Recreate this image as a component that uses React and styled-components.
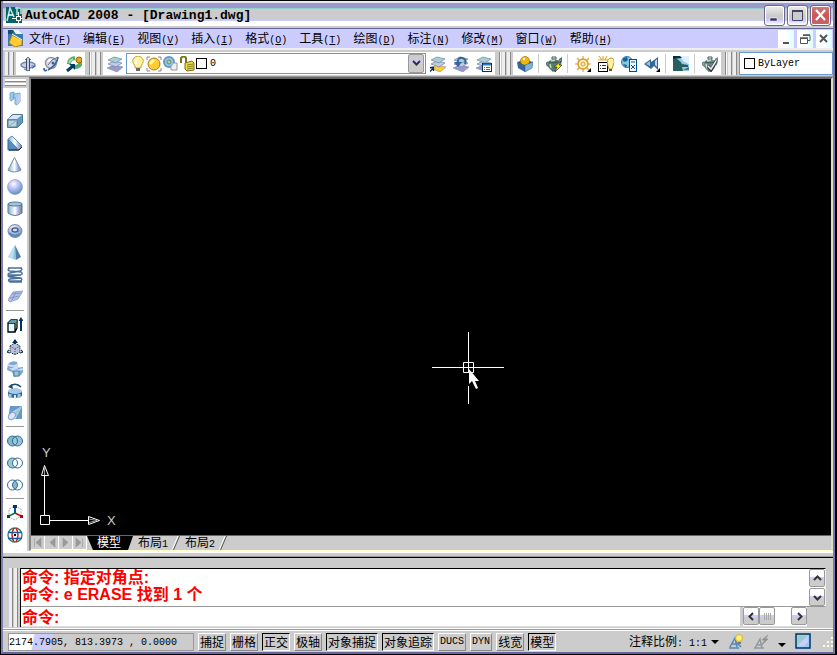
import React from "react";
import styled, { createGlobalStyle, css } from "styled-components";

const GlobalStyle = createGlobalStyle`
  * {
    box-sizing: border-box;
  }
  body {
    margin: 0;
    background: #000;
    font-family: "Liberation Mono", "Noto Sans CJK SC", monospace;
    font-size: 10px;
    color: #000;
  }
  button, input, select {
    font: inherit;
    color: inherit;
    margin: 0;
    padding: 0;
    border: 0;
    border-radius: 0;
    background: none;
    outline: none;
  }
  svg {
    display: block;
    flex: none;
  }
`;

const Frame = styled.div`
  display: flex;
  flex-direction: column;
  height: 100vh;
  min-height: 480px;
  overflow: hidden;
  background: #ccc;
  border: 1px solid #000;
  border-right-width: 2px;
`;

const Inner = styled.div`
  flex: 1;
  min-height: 0;
  display: flex;
  flex-direction: column;
  border: 2px solid #9999cc;
  border-top: 0;
  border-left-color: #8080b0;
  border-right-color: #7777aa;
  border-bottom-color: #666699;
`;

const Han = styled.span`
  font-family: "Noto Sans CJK SC", sans-serif;
  font-size: ${p => (p.$big ? "16px" : "12px")};
`;

const TitleBar = styled.header`
  flex: none;
  height: 28px;
  display: flex;
  align-items: center;
  gap: 3px;
  padding: 0 2px 0 3px;
  border-bottom: 1px solid #666699;
  background: linear-gradient(
    #e8e8f4 0 2px,
    #9999cc 2px 7px,
    #99cccc 7px 8px,
    #ccc 8px 19px,
    #ccccff 19px 20px,
    #fff 20px 25px,
    #ccc 25px 27px
  );
`;

const Title = styled.h1`
  flex: 1;
  margin: 0;
  padding-top: 2px;
  font-size: 13px;
  line-height: 18px;
  font-weight: bold;
  white-space: pre;
`;

const WindowButtons = styled.div`
  display: flex;
  gap: 2px;
  padding-top: 2px;
`;

const WindowButton = styled.button`
  width: 21px;
  height: 21px;
  display: grid;
  place-items: center;
  border: 1px solid #666699;
  border-radius: 3px;
  box-shadow: inset 0 0 0 1px #fff;
  background: ${p =>
    p.$close
      ? "linear-gradient(#cc8080, #cc5555 50%, #cc6666)"
      : "linear-gradient(#eee, #ccc 50%, #ccc 65%, #ccccff 75%, #fff)"};
`;

const MenuBar = styled.nav`
  flex: none;
  height: 21px;
  display: flex;
  align-items: center;
  padding: 0 1px 0 5px;
  background: #ccccff;
  border-bottom: 2px solid #eee;
`;

const MenuItem = styled.button`
  height: 18px;
  padding: 0 6px;
  line-height: 16px;
  white-space: nowrap;
`;

const DocumentButtons = styled.div`
  display: flex;
  gap: 3px;
  margin-left: auto;
  height: 18px;
`;

const DocumentButton = styled.button`
  width: 16px;
  display: grid;
  place-items: center;
  background: linear-gradient(90deg, #fff 50%, #ddffff);
`;

const ToolRow = styled.div`
  flex: none;
  height: 27px;
  display: flex;
  overflow: hidden;
  padding: 2px 0 1px;
  border-bottom: 1px solid #999;
`;

const ToolBar = styled.div`
  flex: ${p => (p.$grow ? "1" : "none")};
  display: flex;
  align-items: stretch;
  padding-right: ${p => (p.$grow ? "0" : "4px")};
  border-right: ${p => (p.$grow ? "0" : "1px solid #888")};
  box-shadow: ${p => (p.$grow ? "none" : "1px 0 #fff")};
`;

const Grip = styled.span`
  flex: none;
  ${p =>
    p.$wide
      ? css`
          height: 11px;
          border-bottom: 1px solid #ccc;
          border-left: 2px solid #ccc;
          border-right: 1px solid #ccc;
          background: linear-gradient(#ccc 0 2px, #fff 2px 4px, #888 4px 5px, #ccc 5px 6px, #fff 6px 8px, #888 8px 9px, #ccc 9px);
        `
      : css`
          width: 9px;
          margin: ${p.$tall ? "0" : "0 2px"};
          background: linear-gradient(90deg, #eee 0 3px, #888 3px 4px, #ccc 4px 5px, #eee 5px 8px, #888 8px);
        `}
`;

const Tools = styled.div`
  display: flex;
  align-items: center;
  background: #fff;
`;

const ToolButton = styled.button`
  width: 23px;
  height: 22px;
  display: grid;
  place-items: center;
`;

const Divider = styled.span`
  flex: none;
  ${p =>
    p.$wide
      ? css`
          height: 6px;
          margin: 0 3px;
          background: linear-gradient(transparent 2px, #999 2px 3px, transparent 3px);
        `
      : css`
          width: 6px;
          height: 19px;
          background: linear-gradient(90deg, transparent 2px, #ccc 2px 3px, transparent 3px);
        `}
`;

const Combo = styled.label`
  width: ${p => (p.$grow ? "auto" : "300px")};
  flex: ${p => (p.$grow ? "1" : "none")};
  display: flex;
  align-items: center;
  gap: 1px;
  padding-left: 4px;
  background: #fff;
  border: 1px solid #6699cc;

  select {
    flex: 1;
    min-width: 0;
    height: 18px;
    padding-left: 2px;
    appearance: none;
  }
`;

const Swatch = styled.span`
  width: 11px;
  height: 11px;
  border: 1px solid #000;
  background: #fff;
`;

const DropArrow = styled.span`
  width: 16px;
  height: 19px;
  margin-right: 1px;
  display: grid;
  place-items: center;
  border: 1px solid #999;
  border-radius: 2px;
  background: linear-gradient(#ccc 30%, #ccccff 35% 50%, #ccc 55%);
`;

const Work = styled.div`
  flex: 1;
  min-height: 0;
  display: flex;
  border-bottom: 2px solid #fff;
`;

const SideBar = styled.aside`
  width: 26px;
  flex: none;
  display: flex;
  flex-direction: column;
  overflow: hidden;
  background: #fff;
  border-right: 2px solid #ccc;

  ${ToolButton} {
    flex: none;
  }
`;

const Mdi = styled.section`
  flex: 1;
  min-width: 0;
  display: flex;
  flex-direction: column;
  border: 2px solid #666;
  border-left-color: #888;
  border-right: 2px solid #ddddcc;
  border-bottom: 1px solid #ffffcc;
`;

const Canvas = styled.main`
  position: relative;
  flex: 1;
  min-height: 0;
  overflow: hidden;
  background: #000;
`;

const Ucs = styled.svg`
  position: absolute;
  left: 8px;
  bottom: 5px;
  font-family: "Liberation Sans", sans-serif;
`;

const Crosshair = styled.svg`
  position: absolute;
  left: 401px;
  top: 253px;
`;

const Tabs = styled.div`
  flex: none;
  height: 15px;
  display: flex;
  border-top: 1px solid #666;
  background: #ccc;
`;

const TabArrow = styled.button`
  width: 14px;
  display: grid;
  place-items: center;
  border-right: 1px solid #fff;
  border-bottom: 1px solid #fff;
`;

const Tab = styled.button`
  display: flex;
  align-items: center;
  height: 14px;
  line-height: 14px;
  white-space: nowrap;
  ${p =>
    p.$active
      ? css`
          padding: 0 12px 0 10px;
          color: #fff;
          background: #000;
          clip-path: polygon(0 0, 100% 0, calc(100% - 5px) 100%, 6px 100%);
        `
      : css`
          gap: 4px;
          padding-left: 5px;
        `}
`;

const Command = styled.section`
  flex: none;
  display: flex;
  margin-top: 4px;
  padding: 10px 7px 1px 6px;
  border-top: 1px solid #000;
  box-shadow: 0 -1px #999;
  gap: 2px;
`;

const CommandBox = styled.div`
  flex: 1;
  min-width: 0;
  color: #f00;
  font-family: "Liberation Sans", "Noto Sans CJK SC", sans-serif;
  font-size: 16px;
  font-weight: bold;
  border-left: 1px solid #000;
`;

const History = styled.div`
  display: flex;
  height: 39px;
  border-top: 1px solid #000;
  border-bottom: 1px solid #999;
  border-right: 1px solid #eee;
  background: #fff;
`;

const Log = styled.div`
  flex: 1;
  padding-left: 1px;
`;

const Line = styled.p`
  margin: 0;
  height: 17px;
  line-height: 15px;
  white-space: pre;
`;

const Scroll = styled.div`
  display: flex;
  flex-direction: ${p => (p.$side ? "row" : "column")};
  justify-content: ${p => (p.$side ? "flex-start" : "space-between")};
  width: ${p => (p.$side ? "67px" : "16px")};
  border-left: ${p => (p.$side ? "3px solid #ccc" : "0")};
`;

const ScrollButton = styled.button`
  width: 16px;
  height: 18px;
  display: grid;
  place-items: center;
  margin-right: ${p => (p.$gap ? "16px" : "0")};
  border: 1px solid #999;
  border-radius: 2px;
  background: linear-gradient(#fff 40%, #ccccff 45% 55%, #ccc 60%);
`;

const Prompt = styled.label`
  display: flex;
  height: 20px;
  line-height: 18px;
  margin-right: 19px;
  padding-left: 1px;
  background: #fff;
  border-bottom: 1px solid #ddd;

  input {
    flex: 1;
    min-width: 0;
    padding-left: 4px;
  }
`;

const StatusBar = styled.footer`
  flex: none;
  display: flex;
  align-items: center;
  height: 24px;
  padding: 2px 0 0 5px;
  gap: 4px;
  border-top: 1px solid #fff;
  box-shadow: inset 0 1px #999, inset 0 2px #fff;
`;

const Coordinates = styled.output`
  width: 186px;
  height: 18px;
  line-height: 17px;
  white-space: pre;
  border: 1px solid #999;
  background: linear-gradient(100deg, #fff 0 24px, #ccccff 26px 42px, #ccc 44px);
`;

const Toggle = styled.button`
  flex: none;
  height: 18px;
  padding: 0 1px;
  line-height: 16px;
  white-space: nowrap;
  border: 1px solid;
  border-color: ${p => (p["aria-pressed"] ? "#000 #fff #fff #000" : "#fff #888 #888 #fff")};
`;

const Tray = styled.div`
  display: flex;
  align-items: center;
  gap: 9px;
  margin-left: auto;
`;

const ScaleButton = styled.button`
  display: flex;
  align-items: center;
  gap: 4px;
  padding-top: 1px;
  line-height: 16px;
  white-space: pre;
`;

const TrayButton = styled.button`
  display: grid;
  place-items: center;
  height: 18px;
`;

// Chinese runs are set larger than the half-width latin around them
const Mixed = ({ text, big }) =>
  text.split(/([\u4e00-\u9fff]+)/).map((part, i) =>
    i % 2 ? (
      <Han key={i} $big={big}>
        {part}
      </Han>
    ) : (
      part
    )
  );

const Icon = ({ children, w = 16, h = 16 }) => (
  <svg width={w} height={h} viewBox={`0 0 ${w} ${h}`} fill="none" aria-hidden="true">
    {children}
  </svg>
);

const Sheets = ({ base = "#9999cc" }) => (
  <>
    <path d="M0 12l7-3 9 2-6 5z" fill={base} stroke="#8089ad" strokeWidth=".6" />
    <path d="M1 8l6-3 8 2-6 4z" fill="#c3cbe8" stroke="#6f7f9f" strokeWidth=".7" />
    <path d="M1 4l6-3 8 2-6 4z" fill="#a9cfd4" stroke="#7083a5" strokeWidth=".7" />
  </>
);

const Teapot = ({ color }) => (
  <>
    <path d="M3 7Q0 5 1 9l3 2M12 7l2-4 2-1-2 7" stroke={color} strokeWidth="1.600" />
    <path d="M2 6q6-6 12 0 0 6-4 9H6Q1 12 2 6z" fill={color} />
    <path d="M3 6q5 2 10 0M6 15h4M6 1h4v2H6z" stroke="#3d5751" />
    <path d="M5 5l4-1M4 8l1 4" stroke="#c5ddd2" strokeWidth="1.400" />
  </>
);

const Lens = ({ left, mid, right }) => (
  <Icon>
    <circle cx="5.5" cy="8" r="5" fill={left} />
    <circle cx="10.5" cy="8" r="5" fill={right} />
    <path d="M8 3.7a5 5 0 010 8.6a5 5 0 010-8.6" fill={mid} />
    <circle cx="5.5" cy="8" r="5" stroke="#336699" />
    <circle cx="10.5" cy="8" r="5" stroke="#336699" />
  </Icon>
);

const Shades = () => (
  <defs>
    <linearGradient id="metal">
      <stop stopColor="#7fa8c8" />
      <stop offset=".25" stopColor="#bcd8e6" />
      <stop offset=".5" stopColor="#fff" />
      <stop offset=".65" stopColor="#ccccf4" />
      <stop offset="1" stopColor="#5f7d94" />
    </linearGradient>
    <radialGradient id="ball" cx=".4" cy=".3" r=".7">
      <stop stopColor="#fff" />
      <stop offset=".35" stopColor="#ccccff" />
      <stop offset="1" stopColor="#5c91bd" />
    </radialGradient>
    <linearGradient id="glass" x2="1" y2="1">
      <stop stopColor="#99cccc" />
      <stop offset=".45" stopColor="#99cccc" />
      <stop offset=".5" stopColor="#ccccff" />
      <stop offset=".7" stopColor="#ccccff" />
      <stop offset=".75" stopColor="#99cccc" />
    </linearGradient>
  </defs>
);

const orbitIcons = [
  ["Constrained orbit", <Icon><ellipse cx="8" cy="9" rx="7" ry="3" fill="#ccccee" stroke="#6688b3" strokeWidth="1.500" /><path d="M6.500 2v13M9.500 2v13" stroke="#444d5c" /><path d="M8 2v13" stroke="#ccd" strokeWidth="2" /><path d="M5 4l3-3 3 3M4 13l4 2 2-2" stroke="#537baa" /><path d="M10 9l3 1-1 3 4-3" fill="#456b99" /></Icon>],
  ["Free orbit", <Icon><circle cx="8" cy="7" r="5.500" fill="#d9ddf5" stroke="#999" strokeWidth="1.500" /><path d="M5 6q1-3 4-2" stroke="#fff" strokeWidth="2" /><path d="M4 14Q1 16 1 12M15 1q-1 8-10 13" stroke="#336699" strokeWidth="1.800" /><path d="M15 1Q8 3 5 9" stroke="#668" /><circle cx="10" cy="7" r="1.500" fill="#336699" /></Icon>],
  ["Continuous orbit", <Icon><path d="M3 8q0-5 6-6M9 11q5 0 6-5" stroke="#55aa66" strokeWidth="4" /><path d="M3 7q1-3 4-4" stroke="#a7ddb8" strokeWidth="2" /><circle cx="13" cy="4" r="3" fill="#e6a817" stroke="#996600" /><path d="M1 15l6-5" stroke="#003f5f" strokeWidth="3" /><path d="M3 8h6v6z" fill="#003f5f" /></Icon>],
];

const layerIcons = [
  ["Make current", <Icon><Sheets base="#ffcc33" /><path d="M0 15.500l3-3M0 11.500h3.500v3.500" stroke="#003366" strokeWidth="1.300" /></Icon>],
  ["Layer previous", <Icon><Sheets /><path d="M5 8Q4 1 9 2t3 6" stroke="#336699" strokeWidth="2" /><path d="M1 6h8l-4 5z" fill="#336699" /></Icon>],
  ["Layer states", <Icon><Sheets /><rect x="6.500" y="7.500" width="9" height="8" fill="#fff" stroke="#003366" /><path d="M7 8.500h8" stroke="#3377bb" strokeWidth="2" /><path d="M8 11.500h1m1 0h4M8 13.500h1m1 0h4" stroke="#3377bb" /></Icon>],
];

const renderIcons = [
  ["Materials", <Icon><path d="M0 6l8-2 8 2-8 4z" fill="#174e79" /><circle cx="8" cy="5" r="4.500" fill="#f5b700" stroke="#9c7100" strokeWidth=".7" /><circle cx="7" cy="3" r="1.200" fill="#fff" /><path d="M0 6l8 3v7l-7-4z" fill="#336699" /><path d="M8 9l8-3-1 6-7 4z" fill="#7db4d7" stroke="#336699" strokeWidth=".6" /></Icon>],
  null,
  ["Render", <Icon><Teapot color="#557a70" /><path d="M15 5l-7 6h3l-2 5 7-7h-3z" fill="#ffed00" stroke="#333" strokeWidth=".7" /></Icon>],
  null,
  ["Point light", <Icon><path d="M8 0v16M0 8h16M2 2l12 12M14 2L2 14" stroke="#e0a040" strokeWidth="1.200" /><circle cx="8" cy="8" r="5" fill="#fff2c5" stroke="#dd9922" strokeWidth="1.500" /><circle cx="8" cy="8" r="2" stroke="#cc9933" /><path d="M16 12v4h-4z" fill="#000" /></Icon>],
  ["Light list", <Icon><path d="M1 0l3 4M5 0v4M9 0L7 4M0 4h10" stroke="#e2aa39" strokeWidth="1.200" /><rect x=".5" y="6.500" width="9" height="9" fill="#fff" stroke="#000" /><path d="M2 9.500h1m1 0h4M2 12.500h1m1 0h4" stroke="#234" /><path d="M10 10q-2-8 3-8t2 8l-1 3h-3z" fill="#fff3a1" stroke="#bd9d33" /><path d="M11 14h3" stroke="#555" strokeWidth="2" /></Icon>],
  ["Geographic location", <Icon><circle cx="6" cy="6" r="5.500" fill="#85c7db" stroke="#3376b0" /><path d="M2 2l4-1 1 3-3 2-2-1M2 8l4 1-1 3" fill="#16639e" /><rect x="8.500" y="3.500" width="7" height="12" fill="#eef8ff" stroke="#004c8c" /><path d="M10 6h4M10 9l4 4M14 9l-4 4" stroke="#164f99" /></Icon>],
  ["Walk and fly", <Icon><path d="M0 8l7-5v3l3-2 4-3v13l-4-4-3 3z" fill="#336699" /><path d="M2 8l4-3v5z" fill="#99cccc" /><path d="M11 5l2-2v8l-2-2z" fill="#ccccff" /><path d="M16 12v4h-4z" fill="#000" /></Icon>],
  null,
  ["Render environment", <Icon><path d="M0 0h16v15H0z" fill="#97c9df" /><path d="M7 0h9v8q-7-2-9-8z" fill="#e3efff" /><path d="M0 1q7 3 9 7l6 1v2H9l1 4H0z" fill="#275e5f" /><path d="M0 0h7l2 2-9 1z" fill="#003344" /><path d="M10 14h6v-3z" fill="#3377ad" /></Icon>],
  null,
  ["Advanced render", <Icon><Teapot color="#6c8a83" /><path d="M6 10l3 4 5-9" stroke="#334" strokeWidth="3" /><path d="M6 10l3 3 5-8" stroke="#e7eeed" strokeWidth="1.500" /></Icon>],
];

const modelIcons = [
  ["Polysolid", <Icon><path d="M3 2l4-1v7L4 10 3 8z" fill="#99ccee" stroke="#6699cc" strokeWidth=".8" /><path d="M7 3l6-1v9l-3 3-2-1V6L6 7z" fill="#a6ccec" stroke="#6699cc" strokeWidth=".8" /><path d="M10 6l3-3v8l-3 3z" fill="#c5c5f5" /></Icon>],
  ["Box", <Icon><path d="M0.500 6.500l5-5h10v8l-5 5h-10z" fill="#6699bb" stroke="#4b7798" /><path d="M1 7h9v7H1z" fill="#bbd6df" stroke="#557c96" /><path d="M1 6l5-4h9l-5 4z" fill="#dce4ff" /><path d="M1 14l9-7" stroke="#8aabc1" /></Icon>],
  ["Wedge", <Icon><path d="M1 4v11h11z" fill="#538fc0" stroke="#336699" /><path d="M1 4l4-3 10 10-3 4z" fill="url(#metal)" stroke="#668aa4" /><path d="M2 15h10l3-3" stroke="#222" /></Icon>],
  ["Cone", <Icon><path d="M7.500 0.500L1 13q6 4 13 0z" fill="url(#metal)" stroke="#778b9b" /></Icon>],
  ["Sphere", <Icon><circle cx="8" cy="8" r="7.500" fill="url(#ball)" stroke="#8499b7" strokeWidth=".6" /></Icon>],
  ["Cylinder", <Icon><path d="M1 3v9q7 5 14 0V3z" fill="url(#metal)" stroke="#587a91" /><ellipse cx="8" cy="3" rx="7" ry="2" fill="#a3c5db" stroke="#557997" /></Icon>],
  ["Torus", <Icon><ellipse cx="8" cy="8" rx="7" ry="6.500" fill="url(#ball)" stroke="#7f92a2" /><ellipse cx="8" cy="7" rx="3" ry="2" fill="#d9dde8" stroke="#41657f" strokeWidth="1.500" /><path d="M2 10q5 5 11 1" stroke="#528db9" strokeWidth="2" /></Icon>],
  ["Pyramid", <Icon><path d="M8 0L1 12l8 3z" fill="#8ec8dd" /><path d="M8 0l6 12-5 3z" fill="#557fab" /><path d="M8 0L1 12l5 2z" fill="#bfdcf3" /></Icon>],
  ["Helix", <Icon><path d="M15 1H3Q-1 3 3 4l11 1q3 2-1 3H3q-4 1 0 2l11 1q2 2-1 3H2M1 1h12q4 1 0 3L3 6q-4 1 0 3l11-1M14 11L3 12q-3 1 0 3h12" stroke="#4c719b" strokeWidth="1.400" /></Icon>],
  ["Planar surface", <Icon><path d="M1 11l5-8 10-1-5 8-8 3z" fill="#b5bfe8" stroke="#91a5ce" /><path d="M5 5l9-1M3 9l9-2M9 3l-4 8" stroke="#6f90bb" strokeWidth=".8" /></Icon>],
  null,
  ["Extrude", <Icon><path d="M1 6h7v9H1zM1 6l3-3h6v8l-2 4" fill="#dffbff" stroke="#000" strokeWidth="1.300" /><path d="M1 6l3-3h6L8 6z" fill="#5f9aaa" /><path d="M14 14V3" stroke="#003366" strokeWidth="2" /><path d="M11.500 4L14 0l2.500 4z" fill="#003366" /></Icon>],
  ["Press pull", <Icon><path d="M3 7l5-3 5 3v6l-5 3-5-3z" fill="#b9bfdb" stroke="#000" strokeDasharray="1 1" /><path d="M3 7l5 3 5-3M8 10v6" stroke="#456" strokeDasharray="1 1" /><path d="M8 5V1" stroke="#003355" strokeWidth="2" /><path d="M5 4l3-4 3 4z" fill="#003355" /><path d="M2 11l-2 2 3 1M14 11l2 2-3 1" stroke="#17384f" strokeWidth="1.200" /></Icon>],
  ["Sweep", <Icon><path d="M1 3q4-4 9-2l1 4-5 1 2 1 8-1v5l-3 4-6 1-2-5-5-2z" fill="#7ba7d2" /><path d="M1 4q5 2 9 0v3l-5 1 4 2 7-2" stroke="#cbdaf6" strokeWidth="2" /><rect x="7" y="10" width="5" height="5" fill="#99cccc" stroke="#517caf" /></Icon>],
  ["Revolve", <Icon><path d="M1 8q7 4 14 0v5q-7 4-14 0z" fill="#336699" /><ellipse cx="8" cy="8" rx="7" ry="3" fill="#a9c9e8" /><path d="M3 11v4M12 11v4" stroke="#99cccc" strokeWidth="3" /><path d="M8 12v4" stroke="#dbe9f9" strokeWidth="2" /><path d="M14 4Q9-1 3 3" stroke="#174c67" strokeWidth="1.500" /><path d="M1 4l4-3 1 5z" fill="#174c67" /></Icon>],
  ["Loft", <Icon><path d="M3 1h12v13H1z" fill="#6699cc" /><path d="M15 1L9 13q-3 4-8 1 0-5 4-7z" fill="#c6dbe9" /><path d="M15 1L6 8l3 4z" fill="#99cccc" /><ellipse cx="5" cy="11" rx="3" ry="4" fill="#dee2fc" stroke="#85a8c9" transform="rotate(45 5 11)" /></Icon>],
  null,
  ["Union", <Lens left="#80bdc8" mid="#99cccc" right="#99c5d9" />],
  ["Subtract", <Lens left="#99cccc" mid="#f8ffff" right="#fff" />],
  ["Intersect", <Lens left="#fff" mid="#80bdc8" right="#fff" />],
  null,
  ["3D move", <Icon><path d="M8 1l6 3v7l-6 4-6-3V4z" stroke="#aaa" strokeDasharray="2 1" /><path d="M8 8V2" stroke="#0055aa" strokeWidth="2" /><path d="M8 8l-6 3" stroke="#008033" strokeWidth="1.500" /><path d="M8 8l6 3" stroke="#bb1111" strokeWidth="1.500" /><path d="M6 0h4v3H6z" fill="#003377" /><path d="M0 10h3v3H0z" fill="#005020" /><path d="M13 10h3v3h-3z" fill="#b00" /></Icon>],
  ["3D rotate", <Icon><circle cx="8" cy="8" r="7" stroke="#338066" strokeWidth="1.400" /><path d="M7 1q-4 7 0 14M9 1q4 7 0 14" stroke="#d01717" strokeWidth="1.500" /><path d="M1 5.500h14M1 11.500h14" stroke="#145daa" strokeWidth="1.400" /><path d="M7 7h2v2H7z" fill="#000" /></Icon>],
  ["3D align", <Icon><path d="M4 5l6-3v4l3 8H7z" fill="#ccc" stroke="#888" /></Icon>],
];

const menus = [
  ["文件", "F"],
  ["编辑", "E"],
  ["视图", "V"],
  ["插入", "I"],
  ["格式", "O"],
  ["工具", "T"],
  ["绘图", "D"],
  ["标注", "N"],
  ["修改", "M"],
  ["窗口", "W"],
  ["帮助", "H"],
];

const toggles = [
  ["捕捉", false],
  ["栅格", false],
  ["正交", true],
  ["极轴", false],
  ["对象捕捉", true],
  ["对象追踪", true],
  ["DUCS", false],
  ["DYN", false],
  ["线宽", false],
  ["模型", true],
];

const ToolSet = ({ items, wide }) =>
  items.map((item, i) =>
    item ? (
      <ToolButton key={i} type="button" aria-label={item[0]}>
        {item[1]}
      </ToolButton>
    ) : (
      <Divider key={i} $wide={wide} />
    )
  );

const Chevron = ({ d }) => (
  <Icon w={9} h={9}>
    <path d={d} stroke="#333" strokeWidth="2" />
  </Icon>
);

const Slash = () => (
  <Icon w={8} h={14}>
    <path d="M7.500 0L1.500 14" stroke="#555" />
    <path d="M6 0L0 14" stroke="#fff" />
  </Icon>
);

const TitleRow = () => (
  <TitleBar>
    <Icon>
      <rect width="16" height="16" fill="#006666" />
      <path d="M1 14L4 1l4 9M9 1h6v6M11 0v8" stroke="#b9e9df" strokeWidth="1.500" />
      <path d="M2 8h5" stroke="#fff" strokeWidth="1.500" />
      <path d="M12.500 5v11M6 11.500h10" stroke="#fff" />
      <rect x="10.500" y="9.500" width="4" height="4" fill="#006666" stroke="#fff" />
    </Icon>
    <Title>AutoCAD 2008 - [Drawing1.dwg]</Title>
    <WindowButtons>
      <WindowButton type="button" aria-label="Minimize">
        <Icon w={15} h={15}><path d="M3 10h7v3H3z" fill="#333366" stroke="#fff" strokeWidth=".5" /></Icon>
      </WindowButton>
      <WindowButton type="button" aria-label="Maximize">
        <Icon w={15} h={15}><path d="M2.500 3.500h10v9h-10z" fill="#ccc" stroke="#444466" /><path d="M2 3h11" stroke="#444466" strokeWidth="2" /></Icon>
      </WindowButton>
      <WindowButton type="button" aria-label="Close" $close>
        <Icon w={15} h={15}><path d="M3 2l9 10M12 2L3 12" stroke="#fff" strokeWidth="2.200" /></Icon>
      </WindowButton>
    </WindowButtons>
  </TitleBar>
);

const Menu = () => (
  <MenuBar>
    <Icon w={15} h={17}>
      <path d="M0 0h11l4 4v12H0z" fill="#347aae" />
      <path d="M0 0h7l-3 4H0z" fill="#174f68" />
      <path d="M5 0h6l4 4H8z" fill="#e7f2ff" />
      <path d="M1 13l3-8 10 5v5l-7 2z" fill="#ffcc33" stroke="#ad821b" />
      <path d="M4 4l10 6" stroke="#fff" />
    </Icon>
    {menus.map(([name, key]) => (
      <MenuItem key={key} type="button">
        <Han>{name}</Han>(<u>{key}</u>)
      </MenuItem>
    ))}
    <DocumentButtons>
      <DocumentButton type="button" aria-label="Minimize drawing">
        <Icon w={12} h={12}><path d="M3 10h6" stroke="#555" strokeWidth="2" /></Icon>
      </DocumentButton>
      <DocumentButton type="button" aria-label="Restore drawing">
        <Icon w={12} h={12}><path d="M4 2.500h7v5H9M1.500 5.500h7v5h-7z" stroke="#555" /><path d="M4 2h7M1 5h8" stroke="#555" strokeWidth="1.500" /></Icon>
      </DocumentButton>
      <DocumentButton type="button" aria-label="Close drawing">
        <Icon w={12} h={12}><path d="M2 2l7 7M9 2L2 9" stroke="#555" strokeWidth="2" /></Icon>
      </DocumentButton>
    </DocumentButtons>
  </MenuBar>
);

const TopTools = () => (
  <ToolRow>
    <ToolBar>
      <Grip />
      <Tools>
        <ToolSet items={orbitIcons} />
      </Tools>
    </ToolBar>
    <ToolBar>
      <Grip />
      <Tools>
        <ToolButton type="button" aria-label="Layer manager">
          <Icon><Sheets /></Icon>
        </ToolButton>
        <Combo>
          <Icon w={14}>
            <path d="M4 10Q0 5 3 2q4-4 8 0 3 3-1 8v2H4z" fill="#fff5a0" stroke="#c3a337" />
            <path d="M5 12h4v3H5z" fill="#667" />
            <path d="M5 4v4" stroke="#fff" strokeWidth="2" />
          </Icon>
          <Icon>
            <path d="M1 1h3M12 1h3v3M1 12v3h3M15 12v3h-3M1 4V1" stroke="#888" />
            <circle cx="8" cy="8" r="6" fill="#ffcc33" stroke="#b37b22" />
            <path d="M4 8l4-4" stroke="#ffff99" strokeWidth="3" />
          </Icon>
          <Icon>
            <circle cx="6" cy="6" r="5" fill="#99cccc" stroke="#6699cc" strokeWidth="2" />
            <circle cx="6" cy="6" r="2" stroke="#5485ba" fill="#cccc66" />
            <path d="M11 7h3v7H8v-3" stroke="#999" fill="#eee" />
          </Icon>
          <Icon w={15}>
            <path d="M1 7V2q3-3 5 0v6" stroke="#7b7418" strokeWidth="2" />
            <path d="M5 7l7-2 2 2v7l-7 1-2-2z" fill="#f1dc32" stroke="#776d1a" />
            <path d="M7 9l6-1M7 11l6-1M7 13l6-1" stroke="#8a8024" />
          </Icon>
          <Swatch />
          <select aria-label="Layer" defaultValue="0">
            <option>0</option>
          </select>
          <DropArrow>
            <Chevron d="M1 2l3.500 3.500L8 2" />
          </DropArrow>
        </Combo>
        <ToolSet items={layerIcons} />
      </Tools>
    </ToolBar>
    <ToolBar>
      <Grip />
      <Tools>
        <ToolSet items={renderIcons} />
      </Tools>
    </ToolBar>
    <ToolBar $grow>
      <Grip />
      <Combo $grow>
        <Swatch />
        <select aria-label="Color" defaultValue="ByLayer">
          <option>ByLayer</option>
        </select>
      </Combo>
    </ToolBar>
  </ToolRow>
);

const Drawing = () => (
  <Canvas>
    <Ucs width="84" height="86" viewBox="0 0 84 86" fill="none" stroke="#fff" aria-label="UCS">
      <path d="M1.500 71.500h9v9h-9zM5.500 71V32M11 76.500h38M2.500 31.500l3-10 4 10zM49.500 72.500v8l11-4z" />
      <path d="M5.500 23v8M50 75l8 1.500-8 2" stroke="#999" />
      <text x="3" y="13" fontSize="13" fill="#ccc" stroke="none">Y</text>
      <text x="68" y="81" fontSize="13" fill="#ccc" stroke="none">X</text>
    </Ucs>
    <Crosshair width="73" height="73" viewBox="0 0 73 73" fill="none" stroke="#fff" aria-hidden="true">
      <path d="M36.500 0v41M36.500 54v18M0 35.500h72M31.500 30.500h10v10h-10z" />
      <path d="M37 37v15l3-3 4 8 2-1-3-7h4z" fill="#fff" stroke="none" />
    </Crosshair>
  </Canvas>
);

const LayoutTabs = () => (
  <Tabs>
    {[
      ["First", "M3.500 2v9M10 2v9L5 6.500z"],
      ["Previous", "M10 2v9L5 6.500z"],
      ["Next", "M4 2v9l5-4.500z"],
      ["Last", "M9.500 2v9M3 2v9l5-4.500z"],
    ].map(([name, d]) => (
      <TabArrow key={name} type="button" aria-label={name}>
        <Icon w={13} h={13}><path d={d} fill="#999" stroke="#999" strokeWidth=".7" /></Icon>
      </TabArrow>
    ))}
    <Tab type="button" $active><span><Mixed text="模型" /></span></Tab>
    <Tab type="button"><span><Mixed text="布局1" /></span><Slash /></Tab>
    <Tab type="button"><span><Mixed text="布局2" /></span><Slash /></Tab>
  </Tabs>
);

const CommandLine = () => (
  <Command>
    <Grip $tall />
    <CommandBox>
      <History>
        <Log>
          <Line><Mixed big text="命令: 指定对角点:" /></Line>
          <Line><Mixed big text="命令: e ERASE 找到 1 个" /></Line>
        </Log>
        <Scroll>
          <ScrollButton type="button" aria-label="Scroll up"><Chevron d="M1 6l3.500-3.500L8 6" /></ScrollButton>
          <ScrollButton type="button" aria-label="Scroll down"><Chevron d="M1 3l3.500 3.500L8 3" /></ScrollButton>
        </Scroll>
      </History>
      <Prompt>
        <span><Mixed big text="命令:" /></span>
        <input type="text" />
        <Scroll $side>
          <ScrollButton type="button" aria-label="Scroll left"><Chevron d="M6 1L2.500 4.500L6 8" /></ScrollButton>
          <ScrollButton type="button" aria-label="Scroll position" $gap>
            <Icon w={9} h={9}><path d="M1.500 1v7M3.500 1v7M5.500 1v7M7.500 1v7" stroke="#aaa" /></Icon>
          </ScrollButton>
          <ScrollButton type="button" aria-label="Scroll right"><Chevron d="M3 1l3.500 3.500L3 8" /></ScrollButton>
        </Scroll>
      </Prompt>
    </CommandBox>
  </Command>
);

const Status = () => (
  <StatusBar>
    <Coordinates>2174.7905, 813.3973 , 0.0000</Coordinates>
    {toggles.map(([name, on]) => (
      <Toggle key={name} type="button" aria-pressed={on}>
        <Mixed text={name} />
      </Toggle>
    ))}
    <Tray>
      <ScaleButton type="button">
        <span><Mixed text="注释比例: 1:1" /></span>
        <Icon w={8} h={5}><path d="M0 0h8L4 4z" fill="#000" /></Icon>
      </ScaleButton>
      <TrayButton type="button" aria-label="Annotation visibility">
        <Icon>
          <path d="M2 13L7 4l2 9M4 10h5M1 14h10M8 8l5 5" stroke="#5289b7" strokeWidth="1.500" />
          <circle cx="11" cy="4" r="3.500" fill="#fff06b" stroke="#d8ad3d" />
          <path d="M10 9h3" stroke="#777" strokeWidth="2" />
        </Icon>
      </TrayButton>
      <TrayButton type="button" aria-label="Automatic scale">
        <Icon>
          <path d="M2 14L7 5l2 9M4 11h5M1 14h10" stroke="#8f9a9f" strokeWidth="1.500" />
          <path d="M15 1L9 6h3l-4 6 7-7h-3z" fill="#888" stroke="#999" />
        </Icon>
      </TrayButton>
      <TrayButton type="button" aria-label="Status bar menu">
        <Icon w={8} h={12}><path d="M0 7h8l-4 4z" fill="#000" /></Icon>
      </TrayButton>
      <TrayButton type="button" aria-label="Clean screen">
        <Icon w={17} h={17}>
          <rect x="1" y="1" width="14" height="14" fill="url(#glass)" stroke="#003366" strokeWidth="1.500" />
          <path d="M2.500 2.500h11v11h-11z" stroke="#99ccff" />
        </Icon>
      </TrayButton>
      <Icon w={12}>
        <path d="M10 4h2M6 8h2m2 0h2M2 12h2m2 0h2m2 0h2" stroke="#ffffdd" strokeWidth="2" />
      </Icon>
    </Tray>
  </StatusBar>
);

const App = () => (
  <Frame>
    <GlobalStyle />
    <svg width="0" height="0" aria-hidden="true"><Shades /></svg>
    <Inner>
      <TitleRow />
      <Menu />
      <TopTools />
      <Work>
        <SideBar>
          <Grip $wide />
          <ToolSet items={modelIcons} wide />
        </SideBar>
        <Mdi>
          <Drawing />
          <LayoutTabs />
        </Mdi>
      </Work>
      <CommandLine />
      <Status />
    </Inner>
  </Frame>
);

export default App;
